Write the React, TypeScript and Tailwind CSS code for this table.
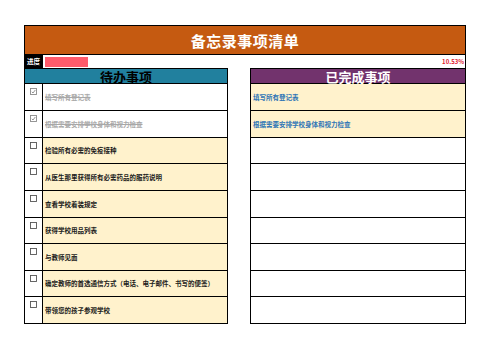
import React from "react";

const leftRows = [
  { text: "填写所有登记表", done: true, h: "h-[27px]" },
  { text: "根据需要安排学校身体和视力检查", done: true, h: "h-[27px]" },
  { text: "检验所有必需的免疫接种", done: false, h: "h-[26px]" },
  { text: "从医生那里获得所有必需药品的服药说明", done: false, h: "h-[27px]" },
  { text: "查看学校着装规定", done: false, h: "h-[27px]" },
  { text: "获得学校用品列表", done: false, h: "h-[26px]" },
  { text: "与教师见面", done: false, h: "h-[27px]" },
  { text: "确定教师的首选通信方式（电话、电子邮件、书写的便签）", done: false, h: "h-[26px]" },
  { text: "带领您的孩子参观学校", done: false, h: "h-[27px]" },
];

const rightRows = [
  "填写所有登记表",
  "根据需要安排学校身体和视力检查",
  "",
  "",
  "",
  "",
  "",
  "",
  "",
];

function Box({ checked }: { checked: boolean }) {
  return (
    <svg width="7" height="7" viewBox="0 0 7 7" className="block">
      <rect x="0.5" y="0.5" width="6" height="6" fill="#ffffff" stroke={checked ? "#8a8a8a" : "#555555"} strokeWidth="0.9" />
      {checked && <path d="M1.8 3.8 L3 5 L5.3 2" fill="none" stroke="#7a7a7a" strokeWidth="0.8" />}
    </svg>
  );
}

export default function App() {
  return (
    <div className="w-[503px] h-[356px] bg-white pt-[25px] pl-[24px] font-['Noto_Sans_CJK_SC',sans-serif]">
      <div className="w-[442px]">
        <div className="h-[30px] border border-black bg-[#c55a11] flex items-center justify-center">
          <span className="text-white font-bold text-[15px] leading-none tracking-[0.5px]">备忘录事项清单</span>
        </div>
        <div className="h-[13px] border-r border-black flex items-center">
          <div className="w-[19px] h-full bg-black flex items-center justify-center">
            <span className="text-white font-bold text-[6.5px] leading-none">进度</span>
          </div>
          <div className="ml-[2px] w-[43px] h-[10px] bg-[#ff5b6b]" />
          <div className="flex-1" />
          <span className="text-[#e0202e] font-bold text-[6px] leading-none pr-[1px]">10.53%</span>
        </div>
        <div className="flex gap-[22px]">
          <div className="w-[204px]">
            <div className="h-[16px] border border-black bg-[#21809e] flex items-center justify-center">
              <span className="text-black font-bold text-[13px] leading-none">待办事项</span>
            </div>
            {leftRows.map((r, i) => (
              <div key={i} className={`${r.h} flex border-x border-b border-black`}>
                <div className="w-[18px] border-r border-black bg-white flex justify-center pt-[4px]">
                  <Box checked={r.done} />
                </div>
                <div className={`flex-1 flex items-center pl-[2px] ${r.done ? "bg-white" : "bg-[#fff2cc]"}`}>
                  <span
                    className={`text-[6.5px] leading-none font-bold whitespace-nowrap ${
                      r.done ? "text-[#a8a8a8] line-through" : "text-[#1a1a1a]"
                    }`}
                  >
                    {r.text}
                  </span>
                </div>
              </div>
            ))}
          </div>
          <div className="w-[216px]">
            <div className="h-[16px] border border-black bg-[#72336d] flex items-center justify-center">
              <span className="text-white font-bold text-[13px] leading-none">已完成事项</span>
            </div>
            {rightRows.map((t, i) => (
              <div
                key={i}
                className={`${leftRows[i].h} flex items-center pl-[2px] border-x border-b border-black ${
                  t ? "bg-[#fff2cc]" : "bg-white"
                }`}
              >
                <span className="text-[6.5px] leading-none font-bold text-[#2e75b6] whitespace-nowrap">{t}</span>
              </div>
            ))}
          </div>
        </div>
      </div>
    </div>
  );
}
